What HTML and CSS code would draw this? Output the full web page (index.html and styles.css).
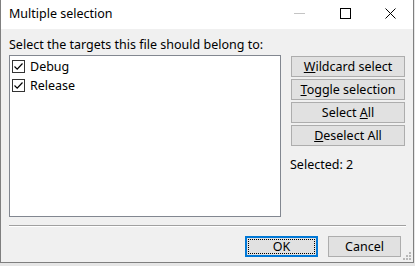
FILE: index.html
```html
<!DOCTYPE html>
<html lang="en">
<head>
  <meta charset="UTF-8">
  <title>Multiple selection</title>
  <link rel="stylesheet" href="styles.css">
</head>
<body>
  <div class="window">
    <div class="titlebar">
      <span class="title">Multiple selection</span>
      <div class="caption-buttons">
        <span class="cap min"><svg width="11" height="11" viewBox="0 0 11 11"><path d="M0 5.5H11" stroke="#c4c4c4" stroke-width="1"/></svg></span>
        <span class="cap max"><svg width="11" height="11" viewBox="0 0 11 11"><rect x="0.5" y="0.5" width="10" height="10" fill="none" stroke="#000" stroke-width="1"/></svg></span>
        <span class="cap close"><svg width="11" height="11" viewBox="0 0 11 11"><path d="M0.5 0.5L10.5 10.5M10.5 0.5L0.5 10.5" stroke="#000" stroke-width="1"/></svg></span>
      </div>
    </div>

    <div class="client">
      <p class="label">Select the targets this file should belong to:</p>
      <div class="main">
        <div class="listbox">
          <label class="item"><span class="check"><svg width="9" height="9" viewBox="0 0 9 9"><path d="M0.5 4.5L3.2 7.2L8.5 1.5" fill="none" stroke="#000" stroke-width="1.2"/></svg></span>Debug</label>
          <label class="item"><span class="check"><svg width="9" height="9" viewBox="0 0 9 9"><path d="M0.5 4.5L3.2 7.2L8.5 1.5" fill="none" stroke="#000" stroke-width="1.2"/></svg></span>Release</label>
        </div>
        <div class="side">
          <button class="btn"><u>W</u>ildcard select</button>
          <button class="btn"><u>T</u>oggle selection</button>
          <button class="btn">Select <u>A</u>ll</button>
          <button class="btn"><u>D</u>eselect All</button>
          <p class="count">Selected: 2</p>
        </div>
      </div>
      <div class="separator"></div>
      <div class="footer">
        <button class="btn dialog default"><span class="focus">OK</span></button>
        <button class="btn dialog">Cancel</button>
      </div>
      <div class="grip">
        <i></i><i></i><i></i><i></i><i></i><i></i>
      </div>
    </div>
  </div>
</body>
</html>
```

FILE: styles.css
```css
/* Dialog frame */
body {
  margin: 0;
  background: #e6e6e6;
  font-family: 'Noto Sans', 'Liberation Sans', sans-serif;
  font-size: 12.5px;
  color: #000;
}

.window {
  width: 412px;
  height: 262px;
  border: 1px solid #7f7f7f;
  border-top: none;
  background: #f0f0f0;
  display: flex;
  flex-direction: column;
}

.titlebar {
  height: 29px;
  background: #fff;
  display: flex;
  align-items: center;
  justify-content: space-between;
  flex-shrink: 0;
}

.title {
  padding-left: 8px;
  margin-top: -2px;
}

.caption-buttons {
  display: flex;
  align-self: stretch;
}

.cap {
  width: 46px;
  display: flex;
  align-items: center;
  justify-content: center;
  margin-top: -2px;
}

.cap.close {
  width: 45px;
}

/* Client area */
.client {
  position: relative;
  flex: 1;
  padding: 7px 8px 0 8px;
}

.label {
  margin: 0;
  height: 17px;
  line-height: 17px;
}

.main {
  display: flex;
  gap: 10px;
  margin-top: 2px;
}

.listbox {
  width: 270px;
  height: 159px;
  padding-top: 1px;
  border: 1px solid #828790;
  background: #fff;
  box-sizing: content-box;
}

.item {
  display: flex;
  align-items: center;
  height: 19px;
  padding-left: 2px;
}

.check {
  width: 11px;
  height: 11px;
  border: 1px solid #333;
  background: #fff;
  display: flex;
  align-items: center;
  justify-content: center;
  margin-right: 5px;
}

.side {
  width: 114px;
  display: flex;
  flex-direction: column;
  gap: 2px;
  padding-top: 1px;
}

.btn {
  font-family: inherit;
  font-size: 12.5px;
  color: #000;
  background: #e1e1e1;
  border: 1px solid #adadad;
  height: 21px;
  padding: 0;
  margin: 0;
}

.count {
  margin: 9px 0 0 -1px;
  line-height: 16px;
}

.separator {
  margin-top: 8px;
  width: 397px;
  height: 1px;
  background: #a0a0a0;
  border-bottom: 1px solid #fff;
}

.footer {
  display: flex;
  justify-content: flex-end;
  gap: 10px;
  margin-top: 9px;
  padding-right: 4px;
}

.dialog {
  width: 73px;
  height: 21px;
}

.default {
  border: 2px solid #0078d7;
  padding: 1px;
}

.default .focus {
  display: block;
  height: 100%;
  box-sizing: border-box;
  border: 1px dotted #000;
  line-height: 13px;
}

.grip {
  position: absolute;
  right: 2px;
  bottom: 2px;
  width: 9px;
  height: 9px;
}

.grip i {
  position: absolute;
  width: 2px;
  height: 2px;
  background: #b8b8b8;
}

.grip i:nth-child(1) { right: 0; bottom: 0; }
.grip i:nth-child(2) { right: 3px; bottom: 0; }
.grip i:nth-child(3) { right: 6px; bottom: 0; }
.grip i:nth-child(4) { right: 0; bottom: 3px; }
.grip i:nth-child(5) { right: 3px; bottom: 3px; }
.grip i:nth-child(6) { right: 0; bottom: 6px; }
```
